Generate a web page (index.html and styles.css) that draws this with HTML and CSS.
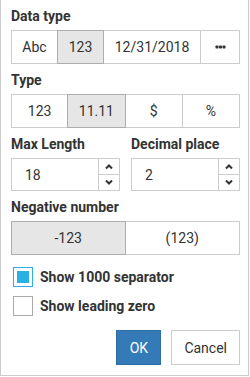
FILE: index.html
```html
<!DOCTYPE html>
<html lang="en">
<head>
	<meta charset="UTF-8">
	<title>Number format</title>
	<link rel="stylesheet" href="styles.css">
</head>
<body>
	<div class="dialog">
		<div class="label">Data type</div>
		<div class="group group-type">
			<span class="seg">Abc</span>
			<span class="seg active">123</span>
			<span class="seg">12/31/2018</span>
			<span class="seg">
				<svg width="11" height="4" viewBox="0 0 11 4"><rect x="0.5" y="0.5" width="3" height="3" rx="0.8"/><rect x="4" y="0.5" width="3" height="3" rx="0.8"/><rect x="7.5" y="0.5" width="3" height="3" rx="0.8"/></svg>
			</span>
		</div>

		<div class="label">Type</div>
		<div class="group group-four">
			<span class="seg">123</span>
			<span class="seg active">11.11</span>
			<span class="seg">$</span>
			<span class="seg">%</span>
		</div>

		<div class="fields">
			<div class="field">
				<div class="label">Max Length</div>
				<div class="spin">
					<span class="spin-value">18</span>
					<span class="spin-btns">
						<span class="arrow"><svg width="8" height="5" viewBox="0 0 8 5"><path d="M1 4.5L4 1.5L7 4.5"/></svg></span>
						<span class="arrow"><svg width="8" height="5" viewBox="0 0 8 5"><path d="M1 0.5L4 3.5L7 0.5"/></svg></span>
					</span>
				</div>
			</div>
			<div class="field">
				<div class="label">Decimal place</div>
				<div class="spin">
					<span class="spin-value">2</span>
					<span class="spin-btns">
						<span class="arrow"><svg width="8" height="5" viewBox="0 0 8 5"><path d="M1 4.5L4 1.5L7 4.5"/></svg></span>
						<span class="arrow"><svg width="8" height="5" viewBox="0 0 8 5"><path d="M1 0.5L4 3.5L7 0.5"/></svg></span>
					</span>
				</div>
			</div>
		</div>

		<div class="label">Negative number</div>
		<div class="group group-two">
			<span class="seg active">-123</span>
			<span class="seg">(123)</span>
		</div>

		<div class="checks">
			<label class="check"><span class="box checked"></span>Show 1000 separator</label>
			<label class="check"><span class="box"></span>Show leading zero</label>
		</div>

		<div class="actions">
			<button class="btn btn-ok">OK</button>
			<button class="btn">Cancel</button>
		</div>
	</div>
</body>
</html>
```

FILE: styles.css
```css
body {
	margin: 0;
	font-family: Roboto, "Liberation Sans", sans-serif;
	color: #333;
	background: #fff;
}
.dialog {
	width: 249px;
	height: 376px;
	box-sizing: border-box;
	border: 1px solid #ccc;
	border-top: none;
	padding: 8px 8px 0 10px;
}
.label {
	font-size: 14px;
	font-weight: bold;
	line-height: 16px;
	margin-bottom: 6px;
}
.group {
	display: grid;
	height: 34px;
	font-size: 14px;
	margin-bottom: 8px;
}
.group-type {
	grid-template-columns: 47px 46px 97px 1fr;
}
.group-four {
	grid-template-columns: repeat(4, 1fr);
}
.group-two {
	grid-template-columns: 1fr 1fr;
}
.seg {
	display: flex;
	align-items: center;
	justify-content: center;
	border: 1px solid #ccc;
	margin-left: -1px;
	background: #fff;
}
.seg:first-child {
	margin-left: 0;
}
.seg.active {
	background: #e6e6e6;
	border-color: #adadad;
	position: relative;
}
.seg svg {
	fill: #333;
}
.fields {
	display: grid;
	grid-template-columns: 1fr 1fr;
	gap: 11px;
	margin-bottom: 8px;
}
.spin {
	display: flex;
	height: 33px;
	box-sizing: border-box;
	border: 1px solid #ccc;
	font-size: 14px;
}
.spin-value {
	flex: 1;
	display: flex;
	align-items: center;
	padding-left: 13px;
}
.spin-btns {
	width: 20px;
	display: flex;
	flex-direction: column;
	border-left: 1px solid #ccc;
}
.arrow {
	flex: 1;
	display: flex;
	align-items: center;
	justify-content: center;
}
.arrow + .arrow {
	border-top: 1px solid #ccc;
}
.arrow svg {
	fill: none;
	stroke: #333;
	stroke-width: 2;
}
.checks {
	padding: 4px 0 0 2px;
}
.check {
	display: flex;
	align-items: center;
	height: 19px;
	font-size: 14px;
	font-weight: bold;
	margin-bottom: 10px;
}
.box {
	width: 18px;
	height: 18px;
	border: 1px solid #aaa;
	margin-right: 7px;
	display: flex;
	align-items: center;
	justify-content: center;
}
.box.checked {
	border-color: #2bb0e4;
}
.box.checked::after {
	content: "";
	width: 12px;
	height: 12px;
	background: #2bb0e4;
}
.actions {
	display: flex;
	justify-content: flex-end;
	gap: 10px;
	padding-top: 5px;
}
.btn {
	height: 35px;
	padding: 0 12px;
	font-family: inherit;
	font-size: 14px;
	color: #333;
	background: #fff;
	border: 1px solid #ccc;
}
.btn-ok {
	width: 45px;
	color: #fff;
	background: #337ab7;
	border-color: #2e6da4;
}
```
